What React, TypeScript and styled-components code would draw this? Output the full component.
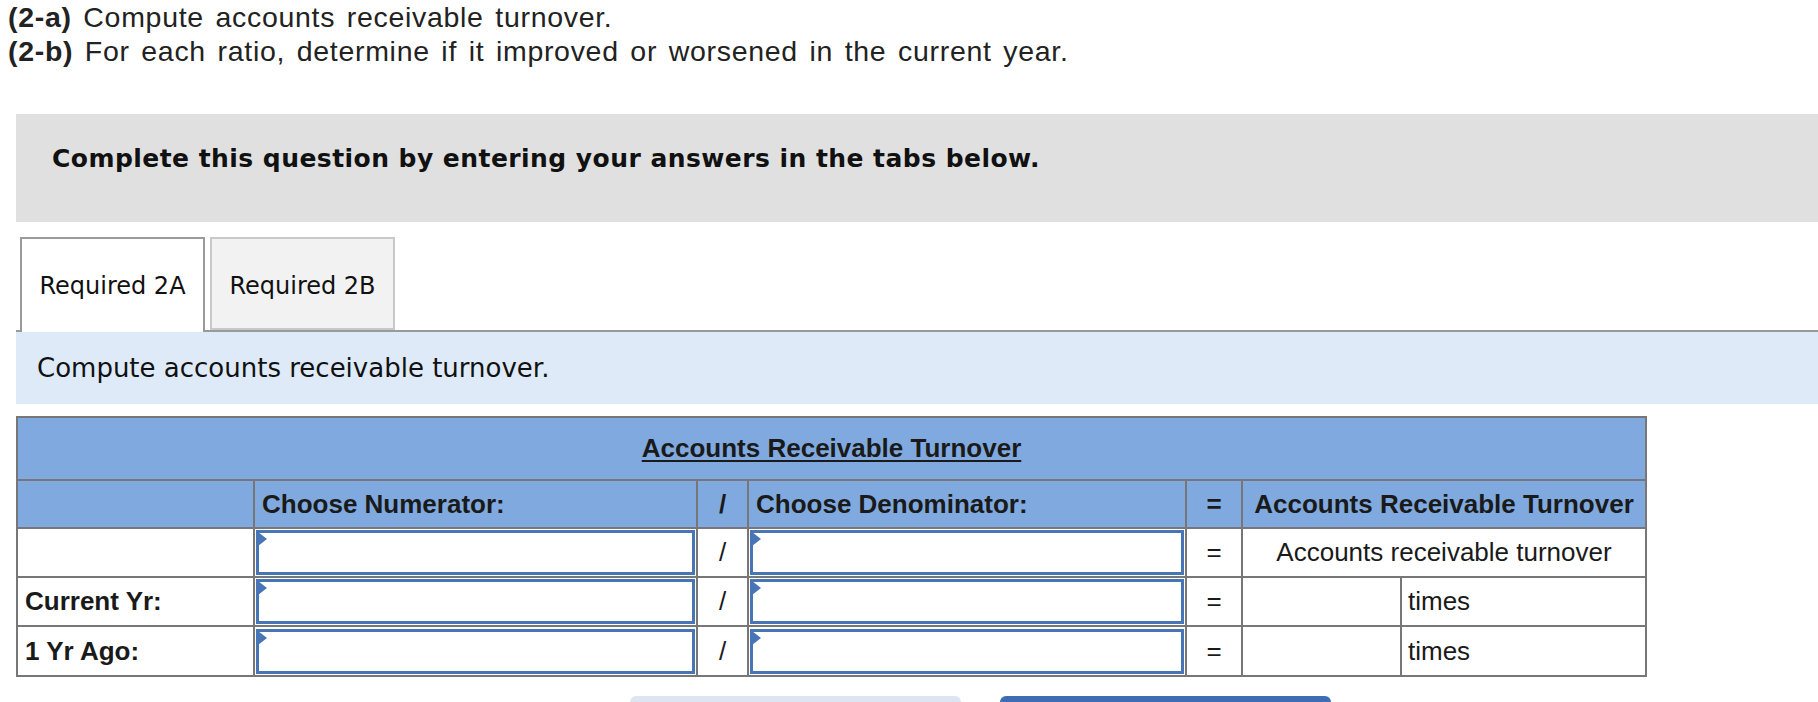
import React from 'react';
import styled, { createGlobalStyle } from 'styled-components';

const Global = createGlobalStyle`
  html, body { margin: 0; padding: 0; background: #ffffff; }
  body { font-family: "Liberation Sans", Arial, sans-serif; color: #1a1a1a; }
  * { box-sizing: border-box; }
`;

const Page = styled.div`
  width: 1818px;
  overflow: hidden;
`;

const Prompt = styled.div`
  padding: 0 0 0 8px;
  font-family: "Liberation Sans", Arial, sans-serif;
  font-size: 28.5px;
  line-height: 34px;
  letter-spacing: 0.7px;
  word-spacing: 3px;
  color: #222222;
`;

const PromptLine = styled.div``;

const Tag = styled.b`
  font-weight: 700;
  word-spacing: 0;
`;

const Body = styled.div`
  padding-left: 16px;
  margin-top: 46px;
`;

const Notice = styled.div`
  height: 108px;
  background: #e0e0e0;
  display: flex;
  align-items: flex-start;
  padding: 30px 0 0 36px;
  font-family: "DejaVu Sans", Verdana, sans-serif;
  font-weight: 700;
  font-size: 25px;
  letter-spacing: 0.45px;
  color: #111111;
`;

const TabBar = styled.div`
  margin-top: 15px;
  display: flex;
  align-items: flex-end;
  gap: 5px;
  padding-left: 4px;
  border-bottom: 2px solid #9a9a9a;
  height: 95px;
`;

const Tab = styled.div<{ $active?: boolean }>`
  width: 185px;
  height: ${(p) => (p.$active ? '95px' : '93px')};
  margin-bottom: ${(p) => (p.$active ? '-2px' : '0')};
  display: flex;
  align-items: center;
  justify-content: center;
  background: ${(p) => (p.$active ? '#ffffff' : '#f2f2f2')};
  border: 2px solid ${(p) => (p.$active ? '#9a9a9a' : '#c8c8c8')};
  border-bottom: ${(p) => (p.$active ? 'none' : '2px solid #c8c8c8')};
  font-family: "DejaVu Sans", Verdana, sans-serif;
  font-size: 24px;
  color: #111111;
  padding-top: ${(p) => (p.$active ? '0' : '4px')};
`;

const Instruction = styled.div`
  height: 72px;
  background: #deeaf8;
  display: flex;
  align-items: center;
  padding-left: 21px;
  font-family: "DejaVu Sans", Verdana, sans-serif;
  font-size: 26px;
  color: #111111;
`;

const Table = styled.table`
  margin-top: 12px;
  width: 1629px;
  border-collapse: collapse;
  table-layout: fixed;
  font-family: "Liberation Sans", Arial, sans-serif;
  font-size: 26px;
  color: #1a1a1a;
`;

const Cell = styled.td<{ $align?: string; $head?: boolean; $bold?: boolean; $pad?: string }>`
  border: 2px solid #777777;
  padding: ${(p) => p.$pad ?? '0 7px'};
  background: ${(p) => (p.$head ? '#80aadf' : '#ffffff')};
  text-align: ${(p) => p.$align ?? 'left'};
  font-weight: ${(p) => (p.$bold ? 700 : 400)};
  vertical-align: middle;
  white-space: nowrap;
`;

const TitleRow = styled.tr`
  height: 63px;
`;

const Row = styled.tr<{ $h: number }>`
  height: ${(p) => p.$h}px;
`;

const Title = styled.span`
  font-weight: 700;
  text-decoration: underline;
  text-underline-offset: 3px;
  text-decoration-thickness: 2px;
`;

const Select = styled.div`
  position: relative;
  height: 45px;
  border: 3px solid #4775b6;
  background: #ffffff;
  &::before {
    content: '';
    position: absolute;
    left: -1px;
    top: -1px;
    width: 0;
    height: 0;
    border-top: 7px solid transparent;
    border-bottom: 7px solid transparent;
    border-left: 9px solid #4775b6;
  }
`;

const ButtonRow = styled.div`
  display: flex;
  gap: 39px;
  padding-left: 614px;
  margin-top: 19px;
`;

const NavButton = styled.button<{ $primary?: boolean }>`
  width: 331px;
  height: 52px;
  border: none;
  border-radius: 6px;
  background: ${(p) => (p.$primary ? '#3e6db3' : '#dce5f0')};
  padding: 0;
`;

const rows = [
  { label: '', result: 'Accounts receivable turnover', h: 49 },
  { label: 'Current Yr:', result: null, h: 49 },
  { label: '1 Yr Ago:', result: null, h: 50 },
];

export default function App() {
  return (
    <Page>
      <Global />
      <Prompt>
        <PromptLine>
          <Tag>(2-a)</Tag> Compute accounts receivable turnover.
        </PromptLine>
        <PromptLine>
          <Tag>(2-b)</Tag> For each ratio, determine if it improved or worsened in the current year.
        </PromptLine>
      </Prompt>
      <Body>
        <Notice>Complete this question by entering your answers in the tabs below.</Notice>
        <TabBar>
          <Tab $active>Required 2A</Tab>
          <Tab>Required 2B</Tab>
        </TabBar>
        <Instruction>Compute accounts receivable turnover.</Instruction>
        <Table>
          <colgroup>
            <col style={{ width: 237 }} />
            <col style={{ width: 443 }} />
            <col style={{ width: 51 }} />
            <col style={{ width: 438 }} />
            <col style={{ width: 56 }} />
            <col style={{ width: 159 }} />
            <col style={{ width: 245 }} />
          </colgroup>
          <tbody>
            <TitleRow>
              <Cell $head colSpan={7} $align="center">
                <Title>Accounts Receivable Turnover</Title>
              </Cell>
            </TitleRow>
            <Row $h={48}>
              <Cell $head />
              <Cell $head $bold>Choose Numerator:</Cell>
              <Cell $head $bold $align="center" $pad="0">/</Cell>
              <Cell $head $bold>Choose Denominator:</Cell>
              <Cell $head $bold $align="center" $pad="0">=</Cell>
              <Cell $head $bold colSpan={2} $align="center">Accounts Receivable Turnover</Cell>
            </Row>
            {rows.map((r, i) => (
              <Row key={i} $h={r.h}>
                <Cell $bold>{r.label}</Cell>
                <Cell $pad="0 1px">
                  <Select />
                </Cell>
                <Cell $align="center" $pad="0">/</Cell>
                <Cell $pad="0 1px">
                  <Select />
                </Cell>
                <Cell $align="center" $pad="0">=</Cell>
                {r.result ? (
                  <Cell colSpan={2} $align="center">{r.result}</Cell>
                ) : (
                  <>
                    <Cell />
                    <Cell $pad="0 6px">times</Cell>
                  </>
                )}
              </Row>
            ))}
          </tbody>
        </Table>
        <ButtonRow>
          <NavButton aria-label="Previous: Required 2A" />
          <NavButton $primary aria-label="Next: Required 2B" />
        </ButtonRow>
      </Body>
    </Page>
  );
}
